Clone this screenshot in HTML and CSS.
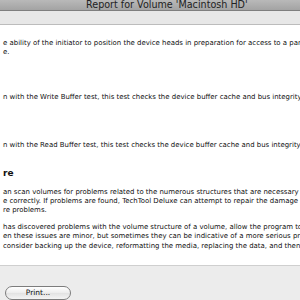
FILE: index.html
```html
<!DOCTYPE html>
<html lang="en">
  <head>
    <meta charset="UTF-8" />
    <title>Report for Volume 'Macintosh HD'</title>
    <link rel="stylesheet" href="styles.css">
  </head>
  <body>
    <div class="window">
      <div class="titlebar">
        <p class="title">Report for Volume 'Macintosh HD'</p>
      </div>
      <div class="toolbar"></div>
      <div class="report">
        <p class="para p1">e ability of the initiator to position the device heads in preparation for access to a particular block<br />e.</p>
        <p class="para p2">n with the Write Buffer test, this test checks the device buffer cache and bus integrity.</p>
        <p class="para p3">n with the Read Buffer test, this test checks the device buffer cache and bus integrity.</p>
        <h2 class="heading">re</h2>
        <p class="para p4">an scan volumes for problems related to the numerous structures that are necessary for<br />e correctly. If problems are found, TechTool Deluxe can attempt to repair the damage<br />re problems.</p>
        <p class="para p5">has discovered problems with the volume structure of a volume, allow the program to<br />en these issues are minor, but sometimes they can be indicative of a more serious problem<br />consider backing up the device, reformatting the media, replacing the data, and then</p>
      </div>
      <div class="footer">
        <button class="btn">Print...</button>
      </div>
    </div>
  </body>
</html>
```

FILE: styles.css
```css
* {
  margin: 0;
  padding: 0;
  box-sizing: border-box;
}
body {
  width: 300px;
  height: 300px;
  overflow: hidden;
  font-family: "DejaVu Sans", "Noto Sans", sans-serif;
  color: #111;
  background: #fff;
}
.window {
  display: flex;
  flex-direction: column;
  height: 300px;
}

.titlebar {
  height: 11px;
  background: linear-gradient(#b9b9b9, #a3a3a3);
  border-bottom: 1px solid #7e7e7e;
  overflow: hidden;
}
.title {
  font-size: 9.6px;
  line-height: 10px;
  padding-left: 86px;
  color: #222;
  white-space: nowrap;
}

.toolbar {
  height: 14px;
  background: #e7e7e7;
  border-bottom: 1px solid #bcbcbc;
}

.report {
  flex: 1;
  overflow: hidden;
  padding-left: 3px;
}
.para {
  font-size: 6.95px;
  line-height: 9.4px;
  white-space: nowrap;
}
.p1 {
  margin-top: 14px;
}
.p2 {
  margin-top: 35px;
}
.p3 {
  margin-top: 39px;
}
.heading {
  font-size: 9px;
  line-height: 12px;
  font-weight: bold;
  margin-top: 16px;
}
.p4 {
  margin-top: 9px;
}
.p5 {
  margin-top: 7px;
}

.footer {
  height: 35px;
  background: #ececec;
  border-top: 1px solid #cfcfcf;
  padding: 14px 0 0 5px;
}
.btn {
  width: 66px;
  height: 14px;
  border: 1px solid #7c7c7c;
  border-radius: 8px;
  background: linear-gradient(#ffffff, #ececec 50%, #e2e2e2 51%, #f4f4f4);
  font-family: "DejaVu Sans", sans-serif;
  font-size: 7.5px;
  color: #111;
}
```
